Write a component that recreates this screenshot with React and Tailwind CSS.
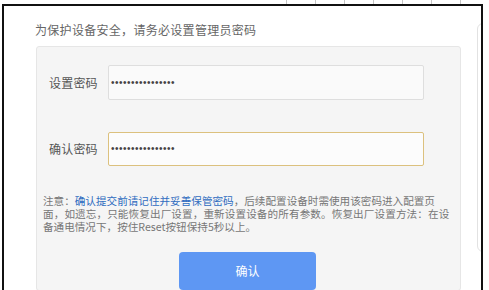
const FONT = { fontFamily: '"Noto Sans CJK SC", "Noto Sans", sans-serif' }

function Field({ label, focused }) {
  return (
    <div className="flex items-center pl-[12px]">
      <div className="w-[59px] text-[12px] tracking-[0.2px] text-[#555]">{label}</div>
      <div
        className={
          focused
            ? 'w-[316px] h-[34px] flex items-center pl-[2px] bg-[#fcfcfc] border border-[#dcc17e] rounded-[2px]'
            : 'w-[316px] h-[35px] flex items-center pl-[2px] bg-[#fafafa] border border-[#dedede] rounded-[2px]'
        }
      >
        <span className="text-[10px] tracking-[0.5px] leading-none text-[#444]" style={{ fontFamily: '"Liberation Sans", sans-serif' }}>
          ••••••••••••••••
        </span>
      </div>
    </div>
  )
}

export default function App() {
  return (
    <div className="w-[489px] h-[290px] bg-white overflow-hidden flex flex-col" style={FONT}>
      {/* table edge peeking above the frame */}
      <div className="h-[4px] flex pl-[286px] shrink-0">
        {[0, 1, 2, 3, 4, 5, 6].map(i => (
          <div key={i} className="w-[33px] border-l border-[#c4c4c4]" />
        ))}
      </div>

      <div className="ml-[2px] w-[481px] flex-1 border-l-2 border-t-2 border-r-2 border-[#111] overflow-hidden flex">
        <div className="pl-[31px] flex flex-col shrink-0">
          <div className="pt-[16px] text-[12px] leading-[16px] tracking-[0.3px] text-[#666]">
            为保护设备安全，请务必设置管理员密码
          </div>

          <div className="mt-[8px] ml-[1px] w-[425px] h-[260px] bg-[#f5f5f5] border border-[#e6e6e6] rounded-[3px] pt-[18px]">
            <Field label="设置密码" />
            <div className="mt-[32px]">
              <Field label="确认密码" focused />
            </div>

            <div className="mt-[28px] pl-[6px] text-[10.6px] leading-[13px] text-[#777] whitespace-nowrap">
              <div>
                注意：<span className="text-[#2f6cc0]">确认提交前请记住并妥善保管密码</span>，后续配置设备时需使用该密码进入配置页
              </div>
              <div className="tracking-[0.1px]">面，如遗忘，只能恢复出厂设置，重新设置设备的所有参数。恢复出厂设置方法：在设</div>
              <div>备通电情况下，按住Reset按钮保持5秒以上。</div>
            </div>

            <button className="mt-[19px] ml-[142px] w-[137px] h-[38px] rounded-[4px] bg-[#5e97f3] text-white text-[12px] flex items-center justify-center">
              确认
            </button>
          </div>
        </div>

        <div className="ml-[16px] mt-[17px] w-[30px] h-[229px] shrink-0 bg-white border border-[#e2e2e2] rounded-[6px]" />
      </div>
    </div>
  )
}
